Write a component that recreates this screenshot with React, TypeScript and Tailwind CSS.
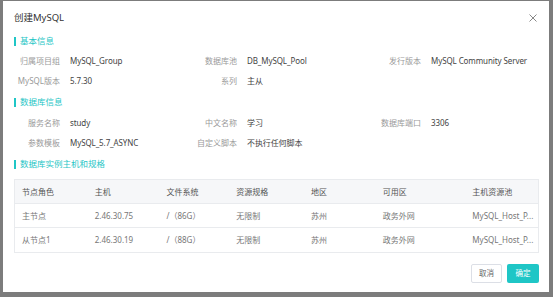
import React from "react";

const font = { fontFamily: '"Noto Sans", "Noto Sans CJK SC", sans-serif' };

function Section({ title, className }: { title: string; className: string }) {
  return (
    <div className={"flex items-center h-[12px] " + className}>
      <div className="w-[2px] h-[9px] bg-[#1fc6c6] mr-[4px]" />
      <span className="text-[8.5px] leading-none text-[#1fc6c6]">{title}</span>
    </div>
  );
}

function Cell({ label, value, cw, lw }: { label: string; value: string; cw: string; lw: string }) {
  return (
    <div className={"flex items-center " + cw}>
      <span className={"text-right text-[8px] text-[#9a9a9a] whitespace-nowrap " + lw}>{label}</span>
      <span className="ml-[10px] text-[8px] text-[#444] whitespace-nowrap tracking-[-0.1px]">{value}</span>
    </div>
  );
}

function InfoRow({ cells, className }: { cells: [string, string][]; className?: string }) {
  const cw = ["w-[177px]", "w-[173px]", "flex-1"];
  const lw = ["w-[46px]", "w-[46px]", "w-[57px]"];
  return (
    <div className={"flex h-[20px] items-center " + (className ?? "")}>
      {cells.map((c, i) => (
        <Cell key={i} label={c[0]} value={c[1]} cw={cw[i]} lw={lw[i]} />
      ))}
    </div>
  );
}

const colW = ["w-[73px]", "w-[72px]", "w-[70px]", "w-[75px]", "w-[72px]", "w-[90px]", "w-[73px]"];

function TRow({ cells, header, last }: { cells: string[]; header?: boolean; last?: boolean }) {
  return (
    <div
      className={
        "flex items-center " +
        (header ? "h-[24px] bg-[#f6f7f9] " : "h-[24px] bg-white ") +
        (last ? "" : "border-b border-[#e9ebee]")
      }
    >
      {cells.map((c, i) => (
        <div
          key={i}
          className={
            colW[i] +
            " pl-[7px] text-[8px] whitespace-nowrap overflow-hidden " +
            (header ? "text-[#555]" : "text-[#777]")
          }
        >
          {c}
        </div>
      ))}
    </div>
  );
}

export default function App() {
  return (
    <div className="w-[553px] h-[297px] bg-[#7c7c7c] pt-[1px] pl-[3px]" style={font}>
      <div className="w-[546px] h-[291px] bg-white pl-[11px] pr-[10px] flex flex-col">
        <div className="h-[34px] flex items-center justify-between">
          <span className="text-[9.5px] text-[#333]">创建MySQL</span>
          <svg width="8" height="8" viewBox="0 0 8 8" className="mr-[2px]">
            <path d="M0.5 0.5 L7.5 7.5 M7.5 0.5 L0.5 7.5" stroke="#888" strokeWidth="1" />
          </svg>
        </div>
        <Section title="基本信息" className="" />
        <InfoRow
          className="mt-[4px]"
          cells={[
            ["归属项目组", "MySQL_Group"],
            ["数据库池", "DB_MySQL_Pool"],
            ["发行版本", "MySQL Community Server"],
          ]}
        />
        <InfoRow
          cells={[
            ["MySQL版本", "5.7.30"],
            ["系列", "主从"],
          ]}
        />
        <Section title="数据库信息" className="mt-[5px]" />
        <InfoRow
          className="mt-[5px]"
          cells={[
            ["服务名称", "study"],
            ["中文名称", "学习"],
            ["数据库端口", "3306"],
          ]}
        />
        <InfoRow
          cells={[
            ["参数模板", "MySQL_5.7_ASYNC"],
            ["自定义脚本", "不执行任何脚本"],
          ]}
        />
        <Section title="数据库实例主机和规格" className="mt-[5px]" />
        <div className="mt-[9px] border border-[#e9ebee]">
          <TRow header cells={["节点角色", "主机", "文件系统", "资源规格", "地区", "可用区", "主机资源池"]} />
          <TRow cells={["主节点", "2.46.30.75", "/（86G）", "无限制", "苏州", "政务外网", "MySQL_Host_P..."]} />
          <TRow last cells={["从节点1", "2.46.30.19", "/（88G）", "无限制", "苏州", "政务外网", "MySQL_Host_P..."]} />
        </div>
        <div className="mt-[11px] flex justify-end gap-[5px]">
          <div className="w-[31px] h-[19px] border border-[#dcdfe6] rounded-[2px] flex items-center justify-center text-[7.5px] text-[#666]">
            取消
          </div>
          <div className="w-[32px] h-[19px] bg-[#1fc6c6] rounded-[2px] flex items-center justify-center text-[7.5px] text-white">
            确定
          </div>
        </div>
      </div>
    </div>
  );
}
